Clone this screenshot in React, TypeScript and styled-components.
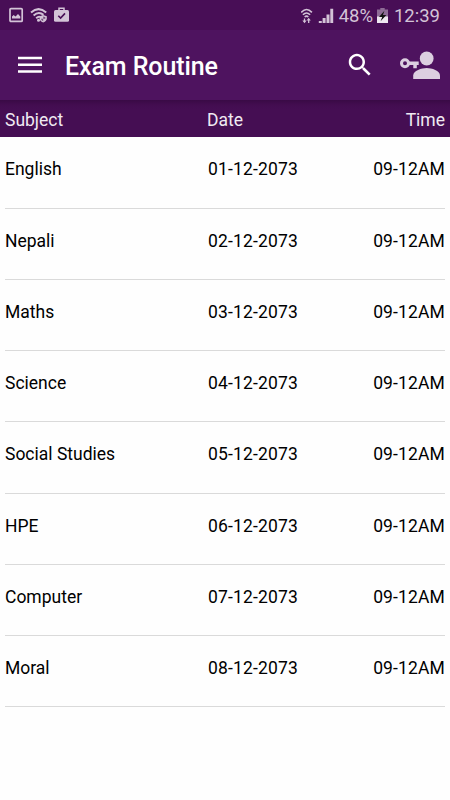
import React from "react";
import styled, { createGlobalStyle } from "styled-components";

const GlobalStyle = createGlobalStyle`
  * { box-sizing: border-box; }
  body { margin: 0; background: #fff; font-family: Roboto, sans-serif; }
`;

const Screen = styled.div`
  width: 450px;
  height: 800px;
  background: #fefefe;
  display: flex;
  flex-direction: column;
  overflow: hidden;
`;

const StatusBar = styled.header`
  height: 30px;
  flex: none;
  background: #480e56;
  color: #d3c3d7;
  display: flex;
  justify-content: space-between;
  padding: 0 10px 0 8px;
`;

const StatusGroup = styled.div<{ $height: number }>`
  display: flex;
  align-items: center;
  height: ${(p) => p.$height}px;
`;

const StatusText = styled.span<{ $width: number; $gap: number }>`
  width: ${(p) => p.$width}px;
  margin-left: ${(p) => p.$gap}px;
  font-size: 18.5px;
  line-height: 30px;
  white-space: nowrap;
  display: flex;
  justify-content: flex-end;
`;

const Icon = styled.svg<{ $gap?: number }>`
  display: block;
  flex: none;
  margin-left: ${(p) => p.$gap ?? 0}px;
`;

const AppBar = styled.div`
  height: 70px;
  flex: none;
  background: #4e135f;
  color: #fff;
  display: flex;
  align-items: center;
`;

const IconButton = styled.button<{ $left: number }>`
  border: 0;
  padding: 0;
  margin: 0 0 0 ${(p) => p.$left}px;
  background: none;
  color: inherit;
`;

const Title = styled.h1`
  margin: 4px 0 0 23px;
  flex: 1;
  font-size: 25px;
  line-height: 30px;
  font-weight: 500;
  letter-spacing: -0.1px;
`;

const Columns = styled.div`
  display: grid;
  grid-template-columns: 202px 1fr 100px;
  > :last-child { text-align: right; }
`;

const TableHead = styled(Columns)`
  height: 37.25px;
  flex: none;
  padding: 0 5px;
  background: linear-gradient(#390a45, #430d50 5px, #450e53 9px, #450e53);
  color: #f0eaf2;
  font-size: 17.5px;
  line-height: 40px;
`;

const Row = styled(Columns)`
  height: 71.25px;
  flex: none;
  margin: 0 5px;
  border-bottom: 1px solid #dadada;
  color: #000;
  font-size: 17.5px;
  line-height: 65.5px;
`;

const DateCell = styled.span`
  padding-left: 1px;
  letter-spacing: 0.17px;
`;

const TimeCell = styled.span`
  letter-spacing: 0.14px;
`;

const subjects = ["English", "Nepali", "Maths", "Science", "Social Studies", "HPE", "Computer", "Moral"];

export default function App() {
  return (
    <Screen>
      <GlobalStyle />
      <StatusBar>
        <StatusGroup $height={30}>
          <Icon width="16" height="16" viewBox="0 0 16 16">
            <rect x="2" y="1.6" width="12.2" height="12.8" rx="1" fill="none" stroke="currentColor" strokeWidth="1.7" />
            <path d="M4 11.500V9.500L5.700 8l1.800 1.500L10 7l2.300 2.500v2z" fill="currentColor" />
          </Icon>
          <Icon $gap={6} width="18" height="16" viewBox="0 0 18 16">
            <g fill="none" stroke="currentColor" strokeWidth="2">
              <path d="M1 5.500Q8.500-1.200 16.200 5.500" />
              <path d="M3.600 8.500Q8.500 4 13.500 7.800" />
              <path d="M6.200 11.200Q8.400 9.200 10 10" />
            </g>
            <circle cx="8.500" cy="13.200" r="1.500" fill="currentColor" />
            <path d="m13.200 8 3.600 1.200v2.400q0 2.600-3.600 4-3.600-1.400-3.600-4V9.200z" fill="currentColor" />
            <path d="M13.200 9.500v4.800q-2-1-2.200-2.500h4.300v-1.500z" fill="#76507f" />
          </Icon>
          <Icon $gap={5} width="17" height="16" viewBox="0 0 17 16">
            <path d="M6 3.200V1.300h5v1.900" fill="none" stroke="currentColor" strokeWidth="1.500" />
            <rect x="1" y="3" width="15" height="11.700" rx="1.500" fill="currentColor" />
            <path d="m5.300 8.800 2.300 2.300 4.400-4.700" fill="none" stroke="#480e56" strokeWidth="1.600" />
          </Icon>
        </StatusGroup>
        <StatusGroup $height={31}>
          <Icon width="13" height="16" viewBox="0 0 13 16">
            <g fill="none" stroke="currentColor" strokeWidth="1.600">
              <path d="M.2 4.400Q5.500-1.300 10.900 4.400" />
              <path d="M1.900 6.800Q5.500 3.200 9.100 6.800" />
              <path d="M3.700 9Q5.500 7.200 7.300 9" />
            </g>
            <path d="M3.500 10.500v3M7.700 12v3" stroke="currentColor" strokeWidth="1.300" />
            <path d="M1.400 12.500h4.200l-2.100 2.700zM5.600 12.500h4.200L7.700 9.800z" fill="currentColor" />
          </Icon>
          <Icon $gap={4} width="17" height="16" viewBox="0 0 17 16">
            <path d="M.8 13h3v2h-3zM4.600 10h3v5h-3zM8.500 6.500h3V15h-3zM12.300.8h2.900V15h-2.900z" fill="currentColor" />
          </Icon>
          <StatusText $width={34} $gap={4}>48%</StatusText>
          <Icon $gap={4} width="11" height="16" viewBox="0 0 11 16">
            <path d="M3.300 0h4.400v1.500H11V15H0V1.500h3.300z" fill="#8e6b96" />
            <path d="M0 8.500h11V15H0z" fill="#eee7f0" />
            <path d="M7.400 2.700 2 9h3.200l-1.600 4.300L9.300 7H6z" fill="#111" />
          </Icon>
          <StatusText $width={46} $gap={6}>12:39</StatusText>
        </StatusGroup>
      </StatusBar>
      <AppBar>
        <IconButton $left={18} aria-label="Menu">
          <Icon width="24" height="18" viewBox="0 0 24 18">
            <path d="M0 .8h24v2.400H0zM0 7.500h24v2.400H0zM0 14.300h24v2.400H0z" fill="currentColor" />
          </Icon>
        </IconButton>
        <Title>Exam Routine</Title>
        <IconButton $left={0} aria-label="Search">
          <Icon width="30" height="30" viewBox="0 0 24 24">
            <path
              fill="currentColor"
              d="M15.500 14h-.790l-.280-.270C15.410 12.590 16 11.110 16 9.500 16 5.910 13.090 3 9.500 3S3 5.910 3 9.500 5.910 16 9.500 16c1.610 0 3.090-.590 4.230-1.570l.270.280v.790l5 4.990L20.490 19l-4.990-5zm-6 0C7.010 14 5 11.990 5 9.500S7.010 5 9.500 5 14 7.010 14 9.500 11.990 14 9.500 14z"
            />
          </Icon>
        </IconButton>
        <IconButton $left={25} aria-label="Account">
          <Icon width="50" height="30" viewBox="0 0 50 30">
            <g fill="#dccfe0">
              <circle cx="26.700" cy="8.500" r="6.900" />
              <path d="M13.200 29v-3.500c0-4.800 8.500-7.500 13.500-7.500S40 20.700 40 25.500V29z" />
              <path d="M9 11.400h9.700V15h-1.900v3.300h-3.500V15H9z" />
            </g>
            <circle cx="5" cy="13.200" r="3.500" fill="none" stroke="#dccfe0" strokeWidth="3" />
          </Icon>
        </IconButton>
      </AppBar>
      <TableHead>
        <span>Subject</span>
        <span>Date</span>
        <span>Time</span>
      </TableHead>
      {subjects.map((subject, index) => (
        <Row key={subject}>
          <span>{subject}</span>
          <DateCell>{`0${index + 1}-12-2073`}</DateCell>
          <TimeCell>09-12AM</TimeCell>
        </Row>
      ))}
    </Screen>
  );
}
